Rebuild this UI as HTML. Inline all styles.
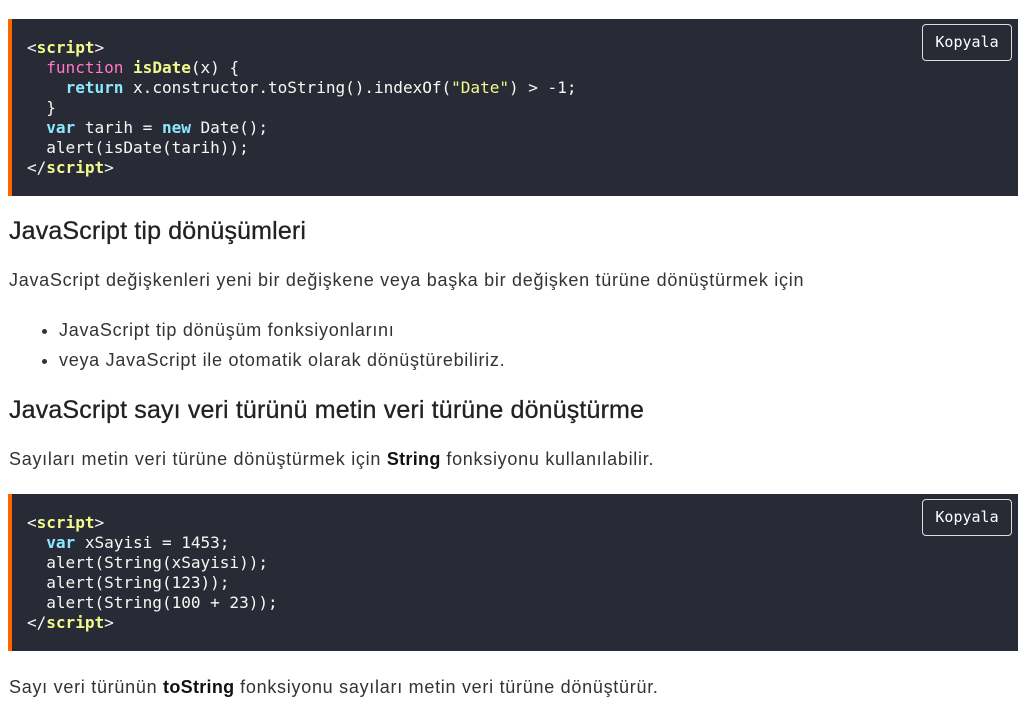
<!DOCTYPE html>
<html><head><meta charset="utf-8"><style>
body{margin:0;background:#fff;width:1027px;height:716px;overflow:hidden;font-family:"Liberation Sans",sans-serif;color:#333}
.code{position:absolute;left:8px;width:1006px;background:#282a36;border-left:4px solid #f60;}
.code pre{margin:0;padding:0 0 0 15px;font-family:"DejaVu Sans Mono","Liberation Mono",monospace;font-size:16.1px;line-height:20px;color:#f8f8f2;letter-spacing:-0.05px}
.btn{position:absolute;right:6px;top:5px;width:90px;height:37px;box-sizing:border-box;border:1px solid #ddd;border-radius:4px;color:#fff;font-family:"DejaVu Sans Mono",monospace;font-size:15px;line-height:35px;text-align:center}
.t{color:#f1fa8c;font-weight:bold}.k{color:#ff79c6}.f{color:#f1fa8c;font-weight:bold}.c{color:#8be9fd;font-weight:bold}.s{color:#f1fa8c}
.x{position:absolute;left:9px;margin:0;white-space:nowrap}
h2{font-size:25px;font-weight:normal;color:#222;letter-spacing:0.15px;-webkit-text-stroke:0.3px #222}
p.x,li{font-size:18px;letter-spacing:0.72px}
ul{position:absolute;left:9px;margin:0;padding-left:50px}
li{line-height:30px}
b{color:#111;letter-spacing:0.3px}
</style></head><body>
<div class="code" style="top:19px;height:177px"><div class="btn">Kopyala</div>
<pre style="padding-top:19px">&lt;<span class="t">script</span>&gt;
  <span class="k">function</span> <span class="f">isDate</span>(x) {
    <span class="c">return</span> x.constructor.toString().indexOf(<span class="s">"Date"</span>) &gt; -1;
  }
  <span class="c">var</span> tarih = <span class="c">new</span> Date();
  alert(isDate(tarih));
&lt;/<span class="t">script</span>&gt;</pre></div>
<h2 class="x" style="top:217px">JavaScript tip dönüşümleri</h2>
<p class="x" style="top:270px">JavaScript değişkenleri yeni bir değişkene veya başka bir değişken türüne dönüştürmek için</p>
<ul style="top:315px"><li>JavaScript tip dönüşüm fonksiyonlarını</li><li>veya JavaScript ile otomatik olarak dönüştürebiliriz.</li></ul>
<h2 class="x" style="top:396px">JavaScript sayı veri türünü metin veri türüne dönüştürme</h2>
<p class="x" style="top:449px">Sayıları metin veri türüne dönüştürmek için <b>String</b> fonksiyonu kullanılabilir.</p>
<div class="code" style="top:494px;height:157px"><div class="btn">Kopyala</div>
<pre style="padding-top:19px">&lt;<span class="t">script</span>&gt;
  <span class="c">var</span> xSayisi = 1453;
  alert(String(xSayisi));
  alert(String(123));
  alert(String(100 + 23));
&lt;/<span class="t">script</span>&gt;</pre></div>
<p class="x" style="top:677px">Sayı veri türünün <b>toString</b> fonksiyonu sayıları metin veri türüne dönüştürür.</p>
</body></html>
